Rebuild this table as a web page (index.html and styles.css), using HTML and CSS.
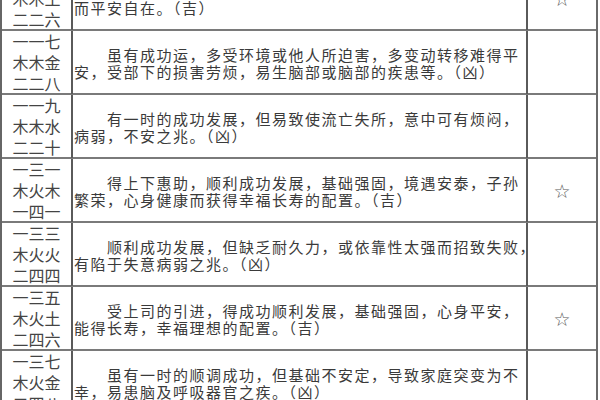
FILE: index.html
```html
<!DOCTYPE html>
<html lang="zh-CN">
<head>
<meta charset="utf-8">
<title>数理表</title>
<link rel="stylesheet" href="styles.css">
</head>
<body>
<div class="table">
  <div class="row">
    <div class="num"><span>一一五</span><span>木木土</span><span>二二六</span></div>
    <div class="desc"><p>基础安定，境遇良好，得上下之助，可成功发展，身心健康</p><p class="cont">而平安自在。（吉）</p></div>
    <div class="mark">☆</div>
  </div>
  <div class="row">
    <div class="num"><span>一一七</span><span>木木金</span><span>二二八</span></div>
    <div class="desc"><p>虽有成功运，多受环境或他人所迫害，多变动转移难得平</p><p class="cont">安，受部下的损害劳烦，易生脑部或脑部的疾患等。（凶）</p></div>
    <div class="mark"></div>
  </div>
  <div class="row">
    <div class="num"><span>一一九</span><span>木木水</span><span>二二十</span></div>
    <div class="desc"><p>有一时的成功发展，但易致使流亡失所，意中可有烦闷，</p><p class="cont">病弱，不安之兆。（凶）</p></div>
    <div class="mark"></div>
  </div>
  <div class="row">
    <div class="num"><span>一三一</span><span>木火木</span><span>一四一</span></div>
    <div class="desc"><p>得上下惠助，顺利成功发展，基础强固，境遇安泰，子孙</p><p class="cont">繁荣，心身健康而获得幸福长寿的配置。（吉）</p></div>
    <div class="mark">☆</div>
  </div>
  <div class="row">
    <div class="num"><span>一三三</span><span>木火火</span><span>二四四</span></div>
    <div class="desc"><p>顺利成功发展，但缺乏耐久力，或依靠性太强而招致失败，</p><p class="cont">有陷于失意病弱之兆。（凶）</p></div>
    <div class="mark"></div>
  </div>
  <div class="row">
    <div class="num"><span>一三五</span><span>木火土</span><span>二四六</span></div>
    <div class="desc"><p>受上司的引进，得成功顺利发展，基础强固，心身平安，</p><p class="cont">能得长寿，幸福理想的配置。（吉）</p></div>
    <div class="mark">☆</div>
  </div>
  <div class="row">
    <div class="num"><span>一三七</span><span>木火金</span><span>二四八</span></div>
    <div class="desc"><p>虽有一时的顺调成功，但基础不安定，导致家庭突变为不</p><p class="cont">幸，易患脑及呼吸器官之疾。（凶）</p></div>
    <div class="mark"></div>
  </div>
</div>
</body>
</html>
```

FILE: styles.css
```css
html, body {
  margin: 0;
  padding: 0;
  background: #ffffff;
  overflow: hidden;
}

body {
  width: 600px;
  height: 400px;
  font-family: "Noto Sans CJK SC", "Noto Sans CJK JP", sans-serif;
  color: #3c3c3c;
}

.table {
  width: 594px;
  margin-top: -33px;
  border-left: 2px solid #666666;
  border-right: 2px solid #6a6a6a;
}

.row {
  display: grid;
  grid-template-columns: 71px 455px 68px;
  height: 62px;
  border-bottom: 2px solid #7a7a7a;
}

.num {
  display: flex;
  flex-direction: column;
  align-items: center;
  justify-content: center;
  border-right: 2px solid #5a5a5a;
  font-size: 16px;
  line-height: 21px;
  color: #444444;
}

.desc {
  display: flex;
  flex-direction: column;
  justify-content: center;
  padding-left: 1px;
  border-right: 2px solid #5a5a5a;
  font-size: 15px;
  letter-spacing: 1.5px;
  line-height: 17px;
  color: #3a3a3a;
}

.desc p {
  margin: 0;
  white-space: nowrap;
  padding-left: 33px;
}

.desc p.cont {
  padding-left: 0;
}

.mark {
  display: flex;
  align-items: center;
  justify-content: center;
  font-size: 19px;
  line-height: 20px;
  color: #5a5a5a;
  font-family: "DejaVu Sans", sans-serif;
}
```
